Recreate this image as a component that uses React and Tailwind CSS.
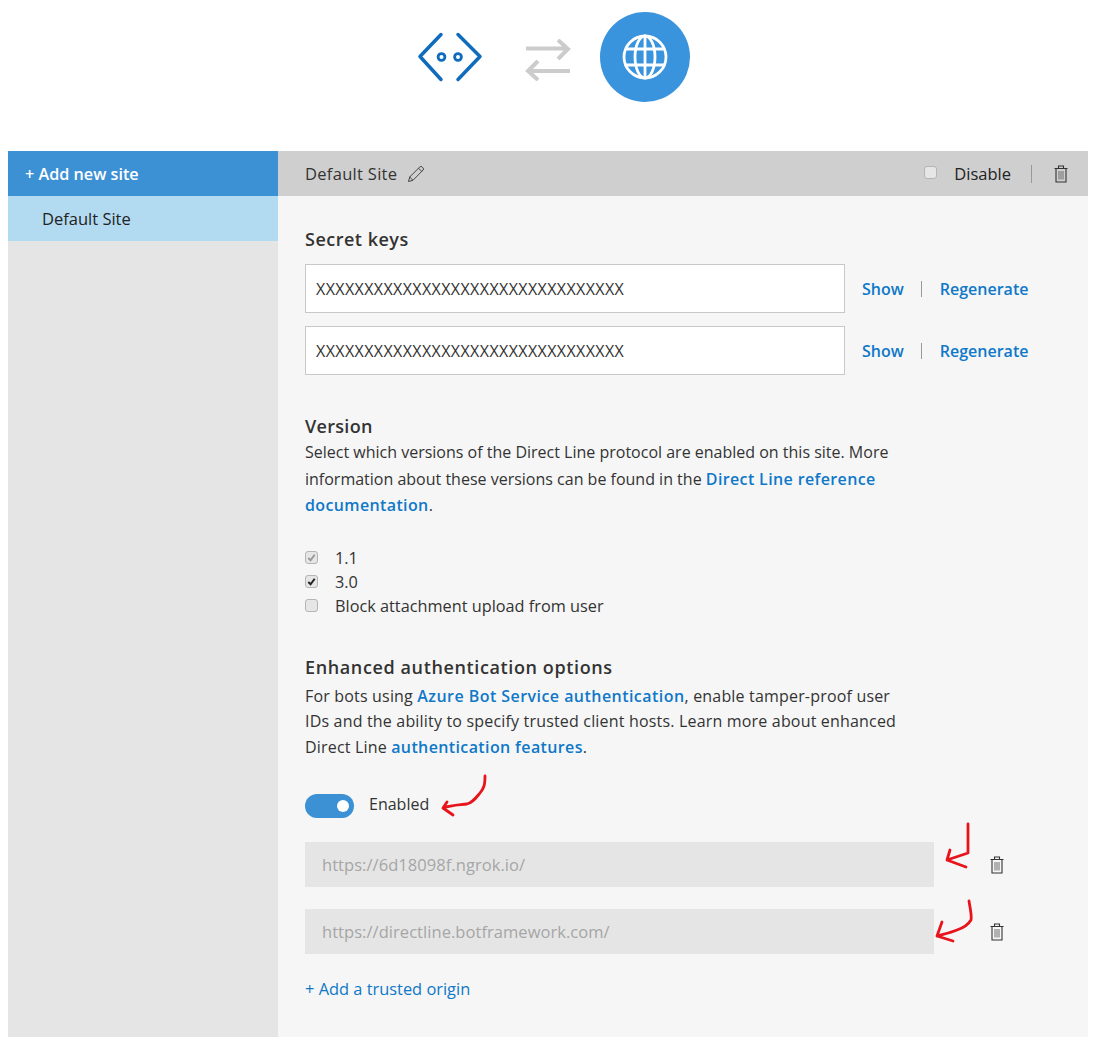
import React from "react";

const font = { fontFamily: '"Open Sans", "Noto Sans", sans-serif' };

function TrashIcon({ className = "" }) {
    return (
        <svg viewBox="0 0 14 18" className={className} fill="none" stroke="#333" strokeWidth="1.1">
            <path d="M0.500 3.500h13M4.500 3.500V1h5v2.500M2 3.500V17h10V3.500" />
            <path d="M5 6v8.500M7 6v8.500M9 6v8.500" stroke="#777" />
        </svg>
    );
}

function PencilIcon() {
    return (
        <svg viewBox="0 0 18 18" className="w-[18px] h-[18px]" fill="none" stroke="#444" strokeWidth="1">
            <path d="M1.500 16.500l1.200-4.500L12.800 1.900a1.600 1.600 0 0 1 2.200 0l1 1a1.600 1.600 0 0 1 0 2.200L6 15.300z" />
            <path d="M2.700 12l3.300 3.300M11.500 3.200l3.300 3.300" />
        </svg>
    );
}

function Checkbox({ checked, muted }) {
    return (
        <span className="w-[13px] h-[13px] rounded-[3px] border border-[#b5b5b5] bg-[#e6e6e6] flex items-center justify-center shrink-0">
            {checked && (
                <svg viewBox="0 0 12 12" className="w-[11px] h-[11px]" fill="none" stroke={muted ? "#9a9a9a" : "#222"} strokeWidth="2.2">
                    <path d="M2.500 6.500l2.500 2.500 4.500-6" />
                </svg>
            )}
        </span>
    );
}

function KeyRow({ mb }) {
    return (
        <div className={`flex items-center ${mb}`}>
            <div className="w-[540px] h-[49px] bg-white border border-[#c8c8c8] pl-[10px] flex items-center text-[16px] text-[#333] tracking-[0.39px]">
                XXXXXXXXXXXXXXXXXXXXXXXXXXXXXXXX
            </div>
            <a className="ml-[17px] text-[#0f78c8] font-semibold text-[16px]">Show</a>
            <span className="ml-[17px] w-px h-[16px] bg-[#999]" />
            <a className="ml-[18px] text-[#0f78c8] font-semibold text-[16px]">Regenerate</a>
        </div>
    );
}

function OriginRow({ url, mb }) {
    return (
        <div className={`flex items-center ${mb}`}>
            <div className="w-[629px] h-[45px] bg-[#e5e5e5] pl-[17px] pt-[2px] flex items-center text-[16.5px] tracking-[0.05px] text-[#a6a6a6]">
                {url}
            </div>
            <TrashIcon className="ml-[56px] w-[14px] h-[18px]" />
        </div>
    );
}

export default function App() {
    return (
        <div className="relative w-[1098px] h-[1045px] bg-white overflow-hidden text-[#333]" style={font}>
            <div className="h-[151px] flex justify-center pt-[12px] pl-[8px]">
                {/* bot icon */}
                <svg viewBox="0 0 66 50" className="w-[66px] h-[50px] mt-[20px]" fill="none" stroke="#0f6cbd" strokeWidth="3.500">
                    <path d="M24 2.500L3 24.500 24 47.500M41 2.500l22 22L41 47.500" strokeLinecap="round" strokeLinejoin="round" />
                    <circle cx="24.500" cy="25" r="3.400" strokeWidth="2.800" />
                    <circle cx="41" cy="25" r="3.400" strokeWidth="2.800" />
                </svg>
                {/* arrows */}
                <svg viewBox="0 0 46 42" className="w-[46px] h-[42px] ml-[42px] mt-[27px] mr-[29px]" fill="none" stroke="#cccccc" strokeWidth="4">
                    <path d="M1 9.500h42M33 1l10 9-10 10M45 32H3M13 22L3 32l10 9" />
                </svg>
                <div className="w-[90px] h-[90px] rounded-full bg-[#3a94dd] flex items-center justify-center">
                    <svg viewBox="0 0 46 46" className="w-[46px] h-[46px]" fill="none" stroke="#ffffff" strokeWidth="2.800">
                        <circle cx="23" cy="23" r="21" />
                        <ellipse cx="23" cy="23" rx="10" ry="21" />
                        <path d="M23 2v42M4 15h38M4 31h38" />
                    </svg>
                </div>
            </div>

            <div className="ml-[8px] w-[1080px] h-[886px] flex">
                <div className="w-[270px] bg-[#e5e5e5]">
                    <div className="h-[45px] bg-[#3c90d4] text-white font-semibold text-[16.2px] flex items-center pl-[17px] pt-px">
                        + Add new site
                    </div>
                    <div className="h-[45px] bg-[#b2dbf2] text-[#222] text-[16.5px] flex items-center pl-[34px] pt-px">
                        Default Site
                    </div>
                </div>

                <div className="flex-1 bg-[#f6f6f6]">
                    <div className="h-[45px] bg-[#cfcfcf] flex items-center pl-[27px] pr-[20px] text-[16.5px] pt-px">
                        <span className="tracking-[0.3px]">Default Site</span>
                        <span className="ml-[10px]"><PencilIcon /></span>
                        <span className="ml-auto -mt-[3px]"><Checkbox /></span>
                        <span className="ml-[17px] text-[#222]">Disable</span>
                        <span className="ml-[20px] w-px h-[18px] bg-[#999]" />
                        <TrashIcon className="ml-[22px] w-[14px] h-[18px]" />
                    </div>

                    <div className="pl-[27px] pt-[28px]">
                        <h2 className="text-[18px] font-semibold leading-[30px] mb-[10px] tracking-[0.5px]">Secret keys</h2>
                        <KeyRow mb="mb-[13px]" />
                        <KeyRow mb="mb-[36px]" />

                        <h2 className="text-[18px] font-semibold leading-[30px] -mb-[2px] tracking-[0.3px]">Version</h2>
                        <p className="w-[600px] text-[16px] leading-[26.500px] mb-[27px]">
                            Select which versions of the Direct Line protocol are enabled on this site. More
                            information about these versions can be found in the{" "}
                            <a className="text-[#0f78c8] font-semibold tracking-[0.37px]">Direct Line reference documentation</a>.
                        </p>

                        <div className="flex flex-col text-[16.3px] leading-[24px] mb-[34px]">
                            <label className="flex items-center gap-[17px]"><Checkbox checked muted />1.1</label>
                            <label className="flex items-center gap-[17px]"><Checkbox checked />3.0</label>
                            <label className="flex items-center gap-[17px]"><Checkbox />Block attachment upload from user</label>
                        </div>

                        <h2 className="text-[18px] font-semibold leading-[30px] mb-[2px] tracking-[0.62px]">Enhanced authentication options</h2>
                        <p className="w-[600px] text-[16px] leading-[25.500px] mb-[34px] tracking-[0.18px]">
                            For bots using <a className="text-[#0f78c8] font-semibold tracking-[0.45px]">Azure Bot Service authentication</a>, enable tamper-proof user
                            IDs and the ability to specify trusted client hosts. Learn more about enhanced
                            Direct Line <a className="text-[#0f78c8] font-semibold tracking-[0.38px]">authentication features</a>.
                        </p>

                        <div className="flex items-center mb-[24px]">
                            <span className="relative w-[49px] h-[24px] rounded-full bg-[#3c90d4] block">
                                <span className="absolute right-[5px] top-[6px] w-[12px] h-[12px] rounded-full bg-white" />
                            </span>
                            <span className="ml-[15px] text-[16px] -mt-[4px]">Enabled</span>
                        </div>

                        <OriginRow url="https://6d18098f.ngrok.io/" mb="mb-[22px]" />
                        <OriginRow url="https://directline.botframework.com/" mb="mb-[23px]" />

                        <a className="text-[#0f78c8] text-[16.4px]">+ Add a trusted origin</a>
                    </div>
                </div>
            </div>

            {/* red annotation arrows */}
            <svg className="absolute left-0 top-0 w-[1098px] h-[1045px] pointer-events-none" viewBox="0 0 1098 1045" fill="none" stroke="#e8141c" strokeWidth="2.800" strokeLinecap="round" strokeLinejoin="round">
                <path d="M485 776c0 9-1 12-5 17-5 6-8 10-13 11-8 1-16 1-24 4M447 802l-4 6 10 7" />
                <path d="M968 824v29l-21 7M950 850l-3 10 19 7" />
                <path d="M969 901c1 7 3 14 2 19-3 5-8 8-14 10-7 3-13 4-20 6M942 922l-5 14 16 5" />
            </svg>
        </div>
    );
}
